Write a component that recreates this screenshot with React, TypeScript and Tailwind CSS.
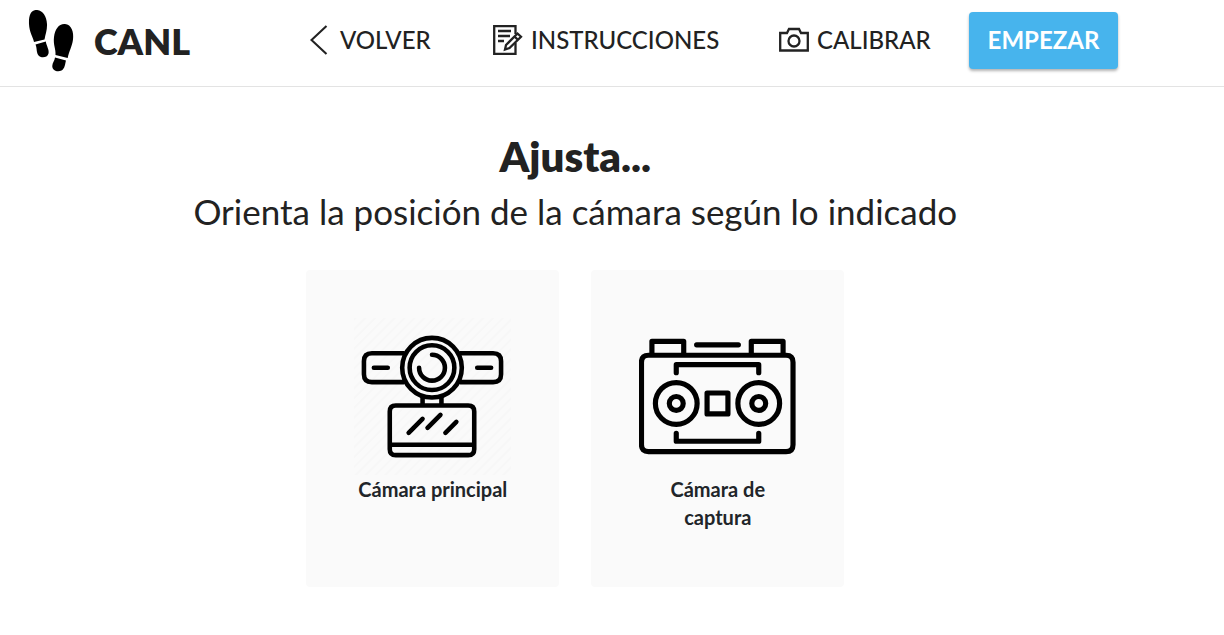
import type { ReactNode } from "react";

function Footprints() {
  return (
    <svg viewBox="0 0 46 62" className="h-[62px] w-[46px] shrink-0" fill="#000" aria-hidden="true">
      <path d="M7.500 0C14.500-.6 18.500 6 19 14c.3 6-1.500 10-2.500 15.500L6 32C5 27 1.300 22 1 14 .7 6 2.500.8 7.500 0Z" />
      <path d="M7.500 34.500 17.800 31.500C18.500 36 21.500 40 20.500 43.500 19.500 47.500 14 48.500 11 46 8 43 9.300 38.500 7.500 34.500Z" />
      <path d="M37 14C43.500 14.500 46 22 45 29.500 44 37 41 41 39.700 48L27.500 45C28 39 25 35 26 27 27 19 31 13.500 37 14Z" />
      <path d="M27 47.500 38 50.500C37 54 37 58.500 33.500 60.500 29.500 62.500 24.500 60.500 24.300 56.500 24 53 26.700 51 27 47.500Z" />
    </svg>
  );
}

function ChevronLeft() {
  return (
    <svg viewBox="0 0 18 30" className="h-[30px] w-[18px] shrink-0" fill="none" stroke="currentColor" strokeWidth="2.100" aria-hidden="true">
      <path d="M16.500 1 1.500 15 16.500 29" />
    </svg>
  );
}

function NoteIcon() {
  return (
    <svg viewBox="0 0 30 30" className="size-[30px] shrink-0" fill="none" stroke="currentColor" strokeWidth="2.300" aria-hidden="true">
      <path d="M22.500 9V1.200H1.200v27.600h21.300V18M5 6h13M5 11h12M5 16h6" />
      <path d="m24.500 8.500 3.500 3.200L16.500 23 12 24.500l1-4.500L24.500 8.500Zm-3 3 3.500 3.300" />
    </svg>
  );
}

function CameraIcon() {
  return (
    <svg viewBox="0 0 30 30" className="size-[30px] shrink-0" fill="none" stroke="currentColor" strokeWidth="2.300" aria-hidden="true">
      <path d="M1.200 8h6.800l2-4h10l2 4h6.800v17.500H1.200V8Z" />
      <circle cx="15" cy="16" r="5.500" />
    </svg>
  );
}

function WebcamDrawing() {
  return (
    <svg viewBox="0 0 158 158" className="aspect-square w-full" fill="none" stroke="#000" strokeWidth="4.600" strokeLinecap="round" strokeLinejoin="round" aria-hidden="true">
      <defs>
        <pattern id="hatch" width="7" height="7" patternUnits="userSpaceOnUse" patternTransform="rotate(45)">
          <path d="M0 0V7" stroke="#f7f7f7" strokeWidth="4" />
        </pattern>
      </defs>
      <path d="M0 0h158v158H0Z" fill="url(#hatch)" stroke="none" />
      <path d="M50 35.500H18q-8 0-8 8v13q0 8 8 8h32M107 35.500h33q8 0 8 8v13q0 8-8 8h-33M20 50h14M124 50h14" />
      <circle cx="78.500" cy="50" r="30" />
      <circle cx="78.500" cy="50" r="22.500" />
      <path d="M78.500 37a13 13 0 1 1-13 13" />
      <path d="M69 80v8M88 80v8M42 88h73q6 0 6 6v38q0 6-6 6H42q-6 0-6-6V94q0-6 6-6ZM36 127.500h85M55 115.500l14-14M74 110.500l13-13M92 115.500l11-11" />
    </svg>
  );
}

function StereoCameraDrawing() {
  return (
    <svg viewBox="0 0 158 158" className="aspect-square w-full" fill="none" stroke="#000" strokeWidth="5.200" strokeLinecap="round" strokeLinejoin="round" aria-hidden="true">
      <path d="M13 36V23.500h32v12.500M113 36V23.500h32v12.500M58 27h42" />
      <path d="M9.500 37.500h138.500q7 0 7 7v83q0 7-7 7H9.500q-7 0-7-7V44.500q0-7 7-7Z" />
      <path d="M37.500 55v-8h83v8M37.500 116v8h83v-8M68.500 75.500h21v21H68.500Z" />
      <circle cx="37.500" cy="86" r="21" />
      <circle cx="37.500" cy="86" r="7" />
      <circle cx="120.500" cy="86" r="21" />
      <circle cx="120.500" cy="86" r="7" />
    </svg>
  );
}

function CameraCard({ title, children }: { title: string; children: ReactNode }) {
  return (
    <article className="w-[253px] rounded bg-[#fafafa] px-12 pt-12 pb-14">
      {children}
      <h3 className="text-center text-xl leading-7 font-bold">{title}</h3>
    </article>
  );
}

export default function App() {
  return (
    <div className="min-h-screen bg-white font-['Lato',sans-serif] text-[#212529]">
      <header className="flex items-center border-b border-[#e3e3e3] pt-[10px] pb-[14px] pl-7 text-[#222]">
        <a href="#inicio" className="flex w-[282px] items-center gap-5 text-4xl font-extrabold">
          <Footprints />
          CANL
        </a>
        <nav className="flex items-center pb-0.5 text-2xl font-medium">
          <a href="#volver" className="flex w-[183px] items-center gap-3">
            <ChevronLeft />
            VOLVER
          </a>
          <a href="#instrucciones" className="flex w-[286px] items-center gap-2">
            <NoteIcon />
            INSTRUCCIONES
          </a>
          <a href="#calibrar" className="flex w-[190px] items-center gap-2">
            <CameraIcon />
            CALIBRAR
          </a>
          <button type="button" className="h-[57px] w-[149px] rounded bg-[#47b4ed] font-bold text-white shadow-[0_2px_3px_rgba(0,0,0,0.3)]">
            EMPEZAR
          </button>
        </nav>
      </header>
      <main className="flex w-[94%] flex-col items-center pt-10 pb-12">
        <h1 className="text-center text-[42px] leading-[58px] font-extrabold text-[#222]">Ajusta...</h1>
        <p className="text-center text-[35px] leading-[53px] font-normal text-[#222]">
          Orienta la posición de la cámara según lo indicado
        </p>
        <section className="mt-8 flex flex-wrap justify-center gap-8">
          <CameraCard title="Cámara principal">
            <WebcamDrawing />
          </CameraCard>
          <CameraCard title="Cámara de captura">
            <StereoCameraDrawing />
          </CameraCard>
        </section>
      </main>
    </div>
  );
}
